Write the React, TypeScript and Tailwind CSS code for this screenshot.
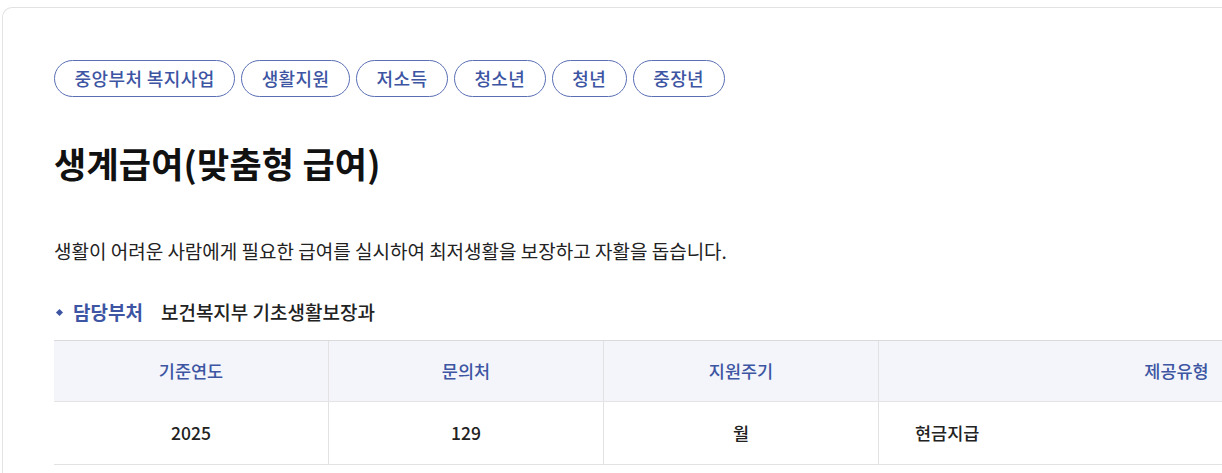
import React from "react";

const tags = ["중앙부처 복지사업", "생활지원", "저소득", "청소년", "청년", "중장년"];

export default function App() {
  return (
    <div
      className="w-[1222px] h-[473px] overflow-hidden bg-white"
      style={{ fontFamily: '"Noto Sans CJK KR", "Noto Sans", sans-serif' }}
    >
      <div className="mt-[7px] ml-[2px] w-[1500px] h-[600px] border-t border-l border-[#e2e2e2] rounded-tl-[10px] pl-[51px] pt-[52px]">
        <div className="flex gap-[6px]">
          {tags.map((t) => (
            <span
              key={t}
              className="h-[37px] flex items-center px-[19.5px] rounded-full border border-[#5a6fb4] text-[18px] font-medium text-[#3d55a3] tracking-[0.4px]"
            >
              {t}
            </span>
          ))}
        </div>
        <h1 className="mt-[44px] h-[44px] flex items-center text-[35px] font-bold text-[#111] tracking-[0.2px]">
          생계급여(맞춤형 급여)
        </h1>
        <p className="mt-[53px] h-[27px] flex items-center text-[19px] text-[#222]">
          생활이 어려운 사람에게 필요한 급여를 실시하여 최저생활을 보장하고 자활을 돕습니다.
        </p>
        <div className="mt-[34px] h-[27px] flex items-center text-[19px]">
          <span className="w-[5px] h-[5px] bg-[#3d55a3] rotate-45 ml-[3px] mr-[11px]" />
          <span className="font-bold text-[#3d55a3]">담당부처</span>
          <span className="ml-[18px] font-medium text-[#222]">보건복지부 기초생활보장과</span>
        </div>
        <div className="mt-[14px] w-[1420px] border-t border-[#dadada]">
          <div className="flex h-[61px] bg-[#f3f5fa] border-b border-[#e4e4e4] text-[17.5px] font-medium text-[#3d55a3]">
            <div className="w-[274px] flex items-center justify-center">기준연도</div>
            <div className="w-[275px] flex items-center justify-center border-l border-[#e2e2e2]">문의처</div>
            <div className="w-[275px] flex items-center justify-center border-l border-[#e2e2e2]">지원주기</div>
            <div className="flex-1 flex items-center justify-center border-l border-[#e2e2e2]">제공유형</div>
          </div>
          <div className="flex h-[63px] border-b border-[#e2e2e2] text-[17.5px] font-medium text-[#222]">
            <div className="w-[274px] flex items-center justify-center">2025</div>
            <div className="w-[275px] flex items-center justify-center border-l border-[#e2e2e2]">129</div>
            <div className="w-[275px] flex items-center justify-center border-l border-[#e2e2e2]">월</div>
            <div className="flex-1 flex items-center pl-[36px] border-l border-[#e2e2e2]">현금지급</div>
          </div>
        </div>
      </div>
    </div>
  );
}
